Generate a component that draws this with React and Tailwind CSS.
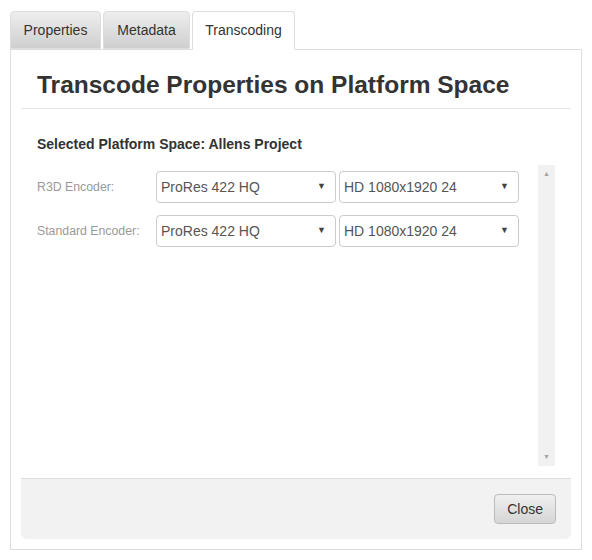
import React from 'react';

const tabs = [
    { label: 'Properties', width: 'w-[91px]' },
    { label: 'Metadata', width: 'w-[87px]' },
    { label: 'Transcoding', width: 'w-[103px]' },
];

const Select = ({ value }) => (
    <div className="flex items-center justify-between h-[32px] w-[180px] border border-[#ccc] rounded-[4px] bg-white pl-[4px] pr-[9px] text-[14px] text-[#555]">
        <span>{value}</span>
        <span className="text-[9px] text-[#444]">▼</span>
    </div>
);

const EncoderRow = ({ label }) => (
    <div className="flex items-center h-[32px]">
        <div className="w-[119px] text-[12.3px] text-[#999]">{label}</div>
        <div className="flex gap-[3px]">
            <Select value="ProRes 422 HQ" />
            <Select value="HD 1080x1920 24" />
        </div>
    </div>
);

const App = () => {
    return (
        <div
            className="w-[592px] h-[560px] bg-white pt-[11px] px-[10px] text-[#333]"
            style={{ fontFamily: '"Liberation Sans", Arial, sans-serif' }}
        >
            {/* Tabs */}
            <div className="flex gap-[2px]">
                {tabs.map((t, i) =>
                    i === 2 ? (
                        <div
                            key={t.label}
                            className={`relative z-10 -mb-px h-[39px] ${t.width} flex items-center justify-center border border-[#ddd] border-b-white rounded-t-[4px] bg-white text-[14px] text-[#333]`}
                        >
                            {t.label}
                        </div>
                    ) : (
                        <div
                            key={t.label}
                            className={`h-[38px] ${t.width} flex items-center justify-center border border-[#ddd] rounded-t-[4px] bg-gradient-to-b from-[#eeeeee] to-[#cfcfcf] text-[14px] text-[#333]`}
                        >
                            {t.label}
                        </div>
                    )
                )}
            </div>

            {/* Panel */}
            <div className="h-[501px] border border-[#ddd] p-[10px] flex flex-col">
                <div className="px-[16px] pt-[8px] pb-[6px] border-b border-[#e5e5e5]">
                    <h1 className="text-[24.5px] font-bold text-[#333] leading-[34px]">
                        Transcode Properties on Platform Space
                    </h1>
                </div>

                <div className="flex-1 px-[16px] pt-[27px]">
                    <div className="text-[14px] font-bold text-[#333] leading-[16px]">
                        Selected Platform Space: Allens Project
                    </div>
                    <div className="flex mt-[19px]">
                        <div className="flex flex-col gap-[12px] w-[503px]">
                            <EncoderRow label="R3D Encoder:" />
                            <EncoderRow label="Standard Encoder:" />
                        </div>
                        <div className="w-[17px] h-[301px] -mt-[6px] bg-[#f1f1f1] flex flex-col items-center justify-between py-[4px] text-[7px] text-[#a3a3a3]">
                            <span>▲</span>
                            <span>▼</span>
                        </div>
                    </div>
                </div>

                <div className="h-[61px] bg-[#f2f2f2] border-t border-[#ddd] rounded-b-[6px] flex items-center justify-end pr-[15px]">
                    <button className="h-[30px] px-[12px] text-[14px] text-[#333] border border-[#bbb] rounded-[4px] bg-gradient-to-b from-[#f0f0f0] to-[#d5d5d5]">
                        Close
                    </button>
                </div>
            </div>
        </div>
    );
};

export default App;
